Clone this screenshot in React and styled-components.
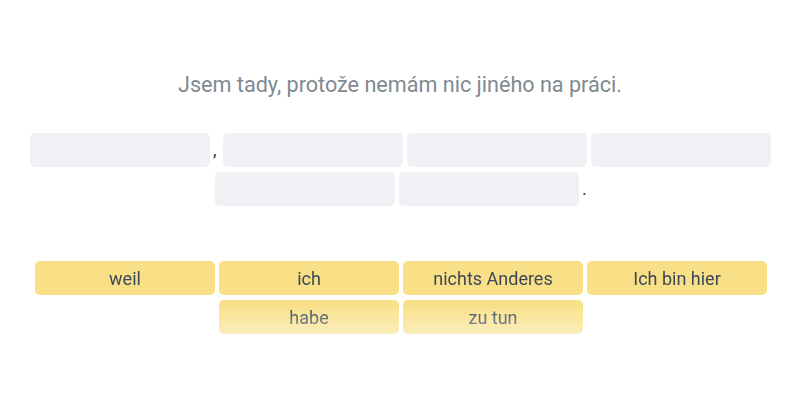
import React from "react";
import styled, { createGlobalStyle } from "styled-components";

const sentence = "Jsem tady, protože nemám nic jiného na práci.";

const answer = [
  { type: "slot" },
  { type: "mark", text: ",", width: 5 },
  { type: "slot" },
  { type: "slot" },
  { type: "slot" },
  { type: "slot" },
  { type: "slot" },
  { type: "mark", text: ".", width: 3 }
];

const words = ["weil", "ich", "nichts Anderes", "Ich bin hier", "habe", "zu tun"];

export default () => {
  return (
    <>
      <GlobalStyle />
      <Page>
        <Prompt>{sentence}</Prompt>
        <Answer>
          {answer.map((item, index) =>
            item.type === "slot" ? (
              <Slot key={index} />
            ) : (
              <Mark key={index} $width={item.width}>
                {item.text}
              </Mark>
            )
          )}
        </Answer>
        <Bank>
          {words.map((word, index) => (
            <Word key={index}>{word}</Word>
          ))}
        </Bank>
      </Page>
    </>
  );
};

const GlobalStyle = createGlobalStyle`
  body {
    margin: 0;
    background: #ffffff;
    font-family: Roboto, "Liberation Sans", sans-serif;
  }
`;

const Page = styled.div`
  width: 800px;
  height: 400px;
  display: flex;
  flex-direction: column;
  align-items: center;
  padding-top: 71px;
  box-sizing: border-box;
`;

const Prompt = styled.div`
  font-size: 21.6px;
  line-height: 28px;
  color: #7f8a8f;
`;

const Answer = styled.div`
  width: 760px;
  margin: 34px 0 0 1px;
  display: flex;
  flex-wrap: wrap;
  justify-content: center;
  align-items: center;
  gap: 5px 4px;
`;

const Slot = styled.div`
  width: 180px;
  height: 34px;
  border-radius: 5px;
  background: #f0f1f5;
`;

const Mark = styled.span`
  width: ${props => props.$width}px;
  font-size: 18px;
  line-height: 22px;
  color: #2c3e50;
  text-indent: -1px;
`;

const Bank = styled.div`
  width: 760px;
  margin: 55px 0 0 2px;
  display: flex;
  flex-wrap: wrap;
  justify-content: center;
  gap: 5px 4px;
  -webkit-mask-image: linear-gradient(to bottom, #000 58%, rgba(0, 0, 0, 0.55) 100%);
  mask-image: linear-gradient(to bottom, #000 58%, rgba(0, 0, 0, 0.55) 100%);
`;

const Word = styled.div`
  width: 180px;
  height: 34px;
  border-radius: 5px;
  background: #f9e086;
  color: #3c4858;
  font-size: 18px;
  display: flex;
  align-items: center;
  justify-content: center;
`;
